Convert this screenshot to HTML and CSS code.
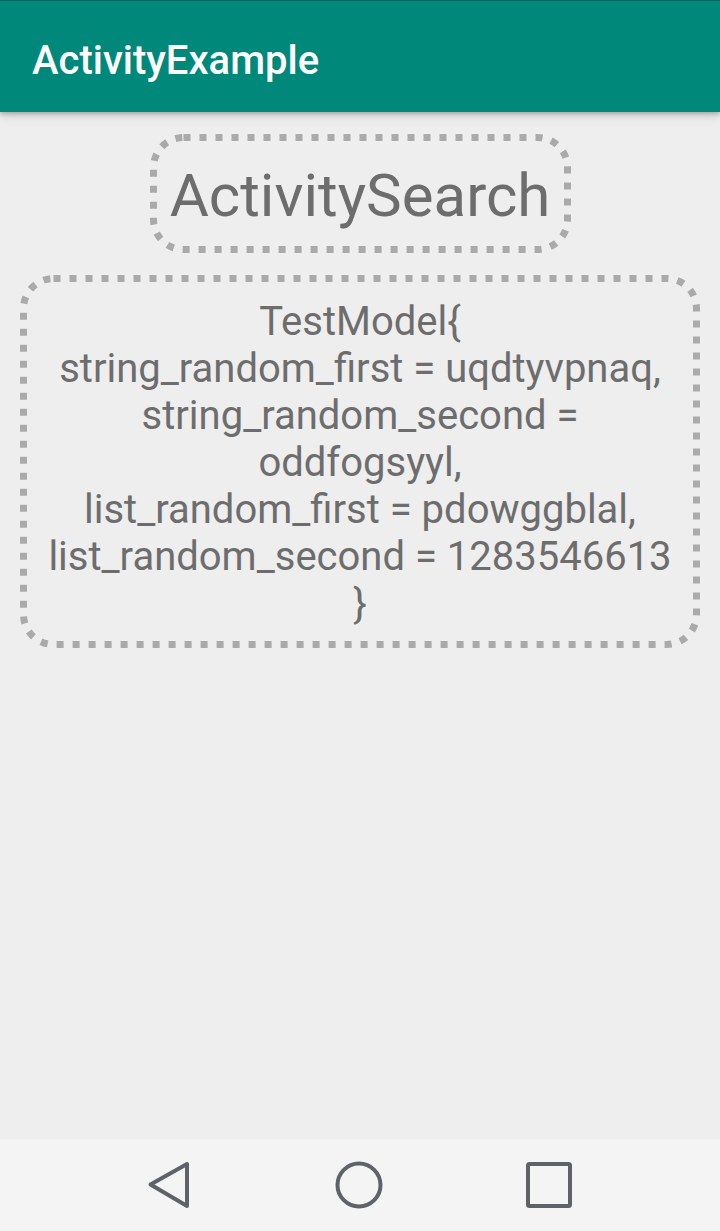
FILE: index.html
```html
<!DOCTYPE html>
<html>
<head>
<meta charset="utf-8">
<link rel="stylesheet" href="styles.css">
</head>
<body>
<div class="screen">
  <header class="appbar">
    <span class="appbar-title">ActivityExample</span>
  </header>
  <main class="content">
    <div class="dotted title-box">
      <svg class="dots" aria-hidden="true"><rect class="dots-rect"/></svg>
      <span class="title-text">ActivitySearch</span>
    </div>
    <div class="dotted model-box">
      <svg class="dots" aria-hidden="true"><rect class="dots-rect"/></svg>
      <p class="model-text">TestModel{<br>string_random_first = uqdtyvpnaq,<br>string_random_second =<br>oddfogsyyl,<br>list_random_first = pdowggblal,<br>list_random_second = 1283546613<br>}</p>
    </div>
  </main>
  <nav class="navbar">
    <svg class="nav-icon" width="48" height="50" viewBox="0 0 48 50"><path d="M4.5 24.5 L41 4 L41 46 Z" fill="none" stroke="#5f6368" stroke-width="4" stroke-linejoin="round"/></svg>
    <svg class="nav-icon" width="50" height="50" viewBox="0 0 50 50"><circle cx="25" cy="25" r="21.5" fill="none" stroke="#5f6368" stroke-width="4"/></svg>
    <svg class="nav-icon" width="50" height="50" viewBox="0 0 50 50"><rect x="4" y="4" width="42" height="42" rx="1.5" fill="none" stroke="#5f6368" stroke-width="4"/></svg>
  </nav>
</div>
</body>
</html>
```

FILE: styles.css
```css
html, body {
  margin: 0;
  padding: 0;
}
body {
  background: #eeeeee;
  font-family: Roboto, "Liberation Sans", sans-serif;
}
.screen {
  width: 720px;
  height: 1231px;
  display: flex;
  flex-direction: column;
  overflow: hidden;
}
.appbar {
  height: 112px;
  flex: none;
  box-sizing: border-box;
  background: #00897b;
  border-top: 1px solid #00695c;
  display: flex;
  align-items: center;
  padding-left: 32px;
  box-shadow: 0 2px 4px rgba(0,0,0,0.22), 0 4px 10px rgba(0,0,0,0.12);
  position: relative;
  z-index: 1;
}
.appbar-title {
  color: #ffffff;
  font-size: 40px;
  font-weight: 500;
  margin-top: 8px;
}
.content {
  flex: 1;
  display: flex;
  flex-direction: column;
  align-items: center;
  padding-top: 22px;
  gap: 22px;
}
.dotted {
  position: relative;
  box-sizing: border-box;
}
.dots {
  position: absolute;
  left: 0;
  top: 0;
  width: 100%;
  height: 100%;
  overflow: visible;
}
.dots-rect {
  x: 3.5px;
  y: 3.5px;
  width: calc(100% - 7px);
  height: calc(100% - 7px);
  rx: 30px;
  ry: 30px;
  fill: none;
  stroke: #aaaaaa;
  stroke-width: 7px;
  stroke-dasharray: 7 9;
}
.title-box {
  width: 421px;
  height: 119px;
  display: flex;
  align-items: center;
  justify-content: center;
}
.title-text {
  font-size: 60px;
  color: #6d6d6d;
  line-height: 70px;
  margin-top: 4px;
}
.model-box {
  width: 680px;
  padding: 23px 10px 21px;
}
.model-text {
  margin: 0;
  text-align: center;
  font-size: 40px;
  line-height: 47px;
  color: #6d6d6d;
}
.navbar {
  height: 92px;
  flex: none;
  background: #f4f4f4;
  display: flex;
  align-items: center;
  padding-left: 146px;
  gap: 140px;
}
```
